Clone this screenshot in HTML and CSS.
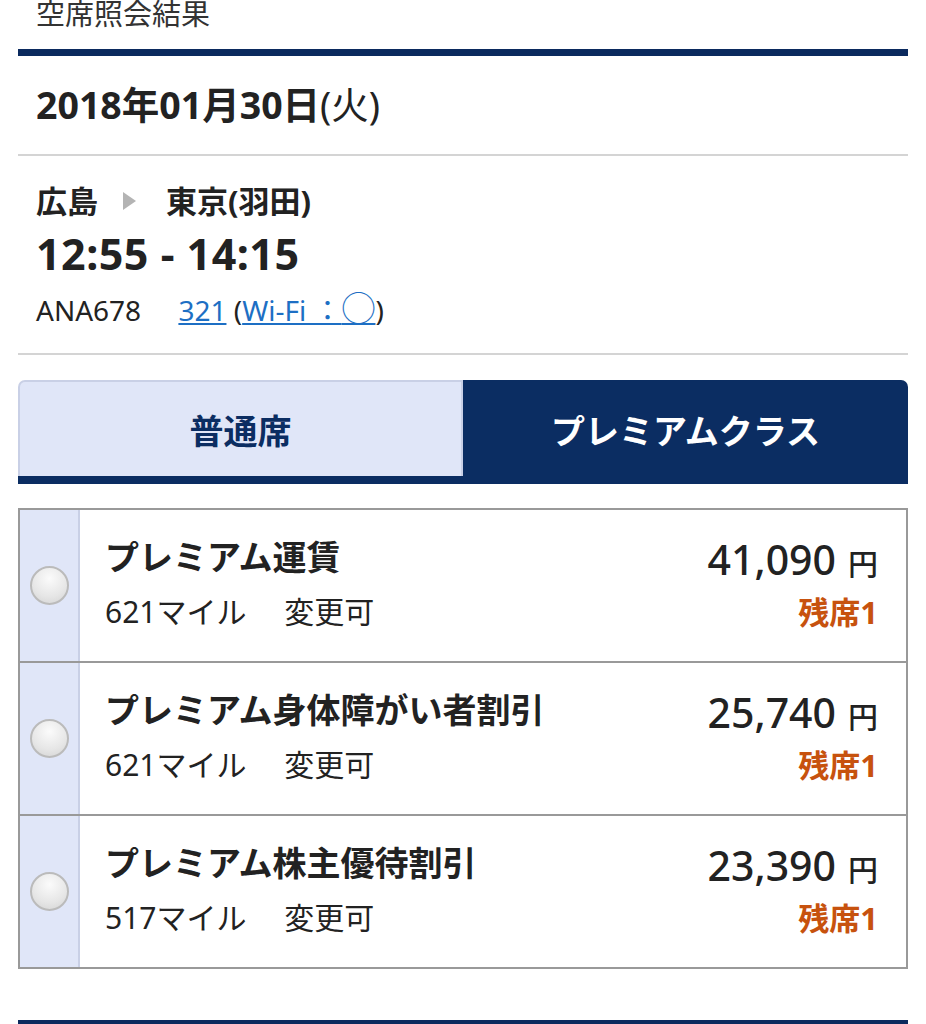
FILE: index.html
```html
<!DOCTYPE html>
<html>
  <head>
    <meta charset="utf-8">
    <title>空席照会結果</title>
    <link rel="stylesheet" href="styles.css">
  </head>
  <body>
    <div class="page">
      <h1 class="page-title">空席照会結果</h1>

      <div class="result-head">
        <div class="flight-date">2018年01月30日<span class="week">(火)</span></div>
      </div>

      <div class="flight-info">
        <div class="route">
          <span>広島</span>
          <span class="route-arrow"></span>
          <span>東京(羽田)</span>
        </div>
        <div class="flight-time">12:55 - 14:15</div>
        <div class="flight-meta">
          <span class="flight-no">ANA678</span>
          <a href="#">321</a> (<a href="#">Wi-Fi&nbsp;：<span class="circle">◯</span></a>)
        </div>
      </div>

      <div class="class-tabs">
        <div class="class-tab">普通席</div>
        <div class="class-tab active">プレミアムクラス</div>
      </div>

      <div class="fare-list">
        <div class="fare-row">
          <div class="fare-select"><span class="radio"></span></div>
          <div class="fare-body">
            <div class="fare-name">プレミアム運賃</div>
            <div class="fare-price">41,090<span class="yen">円</span></div>
            <div class="fare-sub">621マイル　 変更可</div>
            <div class="fare-seats">残席1</div>
          </div>
        </div>
        <div class="fare-row">
          <div class="fare-select"><span class="radio"></span></div>
          <div class="fare-body">
            <div class="fare-name">プレミアム身体障がい者割引</div>
            <div class="fare-price">25,740<span class="yen">円</span></div>
            <div class="fare-sub">621マイル　 変更可</div>
            <div class="fare-seats">残席1</div>
          </div>
        </div>
        <div class="fare-row">
          <div class="fare-select"><span class="radio"></span></div>
          <div class="fare-body">
            <div class="fare-name">プレミアム株主優待割引</div>
            <div class="fare-price">23,390<span class="yen">円</span></div>
            <div class="fare-sub">517マイル　 変更可</div>
            <div class="fare-seats">残席1</div>
          </div>
        </div>
      </div>

      <div class="bottom-bar"></div>
    </div>
  </body>
</html>
```

FILE: styles.css
```css
body {
  background: #FFF;
  color: #222;
  font-family: "Noto Sans", "Noto Sans CJK JP", sans-serif;
  margin: 0;
}

.page {
  padding: 0 18px;
}

.page-title {
  color: #333;
  font-size: 29px;
  font-weight: normal;
  line-height: 34px;
  margin: -3px 0 0;
  padding-left: 18px;
}

.result-head {
  border-bottom: 2px solid #D4D4D4;
  border-top: 7px solid #0B2A5E;
  margin-top: 18px;
  padding: 24px 18px 24px;
}

.flight-date {
  font-size: 37.5px;
  font-weight: bold;
  line-height: 50px;
}

.flight-date .week {
  font-weight: normal;
}

.flight-info {
  border-bottom: 2px solid #D4D4D4;
  padding: 25px 18px 23px;
}

.route {
  align-items: center;
  display: flex;
  font-size: 31px;
  font-weight: bold;
  line-height: 40px;
}

.route-arrow {
  border-bottom: 9px solid transparent;
  border-left: 13px solid #B4B4B4;
  border-top: 9px solid transparent;
  height: 0;
  margin: 0 30px 0 25px;
  width: 0;
}

.flight-time {
  font-size: 43px;
  font-weight: bold;
  letter-spacing: 0.5px;
  line-height: 52px;
  margin-top: 7px;
}

.flight-meta {
  font-size: 28px;
  line-height: 40px;
  margin-top: 10px;
}

.flight-meta .flight-no {
  margin-right: 30px;
}

.flight-meta a {
  color: #1D6FC4;
}

.flight-meta .circle {
  font-size: 34px;
  line-height: 30px;
}

.class-tabs {
  border-bottom: 8px solid #0B2D62;
  display: grid;
  grid-template-columns: 1fr 1fr;
  margin-top: 25px;
}

.class-tab {
  align-items: center;
  background: #E0E6F8;
  border: 2px solid #C9D0E6;
  border-bottom: none;
  border-radius: 7px 0 0 0;
  color: #0B2D62;
  display: flex;
  font-size: 34px;
  font-weight: bold;
  height: 94px;
  justify-content: center;
}

.class-tab.active {
  background: #0B2D62;
  border-color: #0B2D62;
  border-radius: 0 7px 0 0;
  color: #FFF;
}

.fare-list {
  border: 2px solid #999;
  margin-top: 24px;
}

.fare-row {
  border-top: 2px solid #999;
  display: flex;
  height: 151px;
}

.fare-row:first-child {
  border-top: none;
}

.fare-select {
  align-items: center;
  background: #E0E6F8;
  border-right: 2px solid #C9D0E6;
  display: flex;
  justify-content: center;
  width: 58px;
}

.radio {
  background: radial-gradient(circle at 50% 30%, #FBFBFB 0%, #E6E6E6 60%, #D2D2D2 100%);
  border: 2px solid #BBB;
  border-radius: 50%;
  height: 35px;
  width: 35px;
}

.fare-body {
  align-content: start;
  display: grid;
  flex: 1;
  grid-template-columns: 1fr auto;
  padding: 21px 28px 0 25px;
}

.fare-name {
  font-size: 34px;
  font-weight: bold;
  line-height: 52px;
}

.fare-price {
  font-size: 41px;
  font-weight: 500;
  line-height: 52px;
  padding-top: 2px;
  text-align: right;
}

.fare-price .yen {
  font-size: 30px;
  margin-left: 12px;
}

.fare-sub {
  font-size: 30px;
  line-height: 46px;
  margin-top: -1px;
}

.fare-seats {
  color: #C7520E;
  font-size: 31px;
  font-weight: bold;
  line-height: 46px;
  margin-top: -1px;
  text-align: right;
}

.bottom-bar {
  border-top: 8px solid #0B2A5E;
  margin-top: 51px;
}
```
